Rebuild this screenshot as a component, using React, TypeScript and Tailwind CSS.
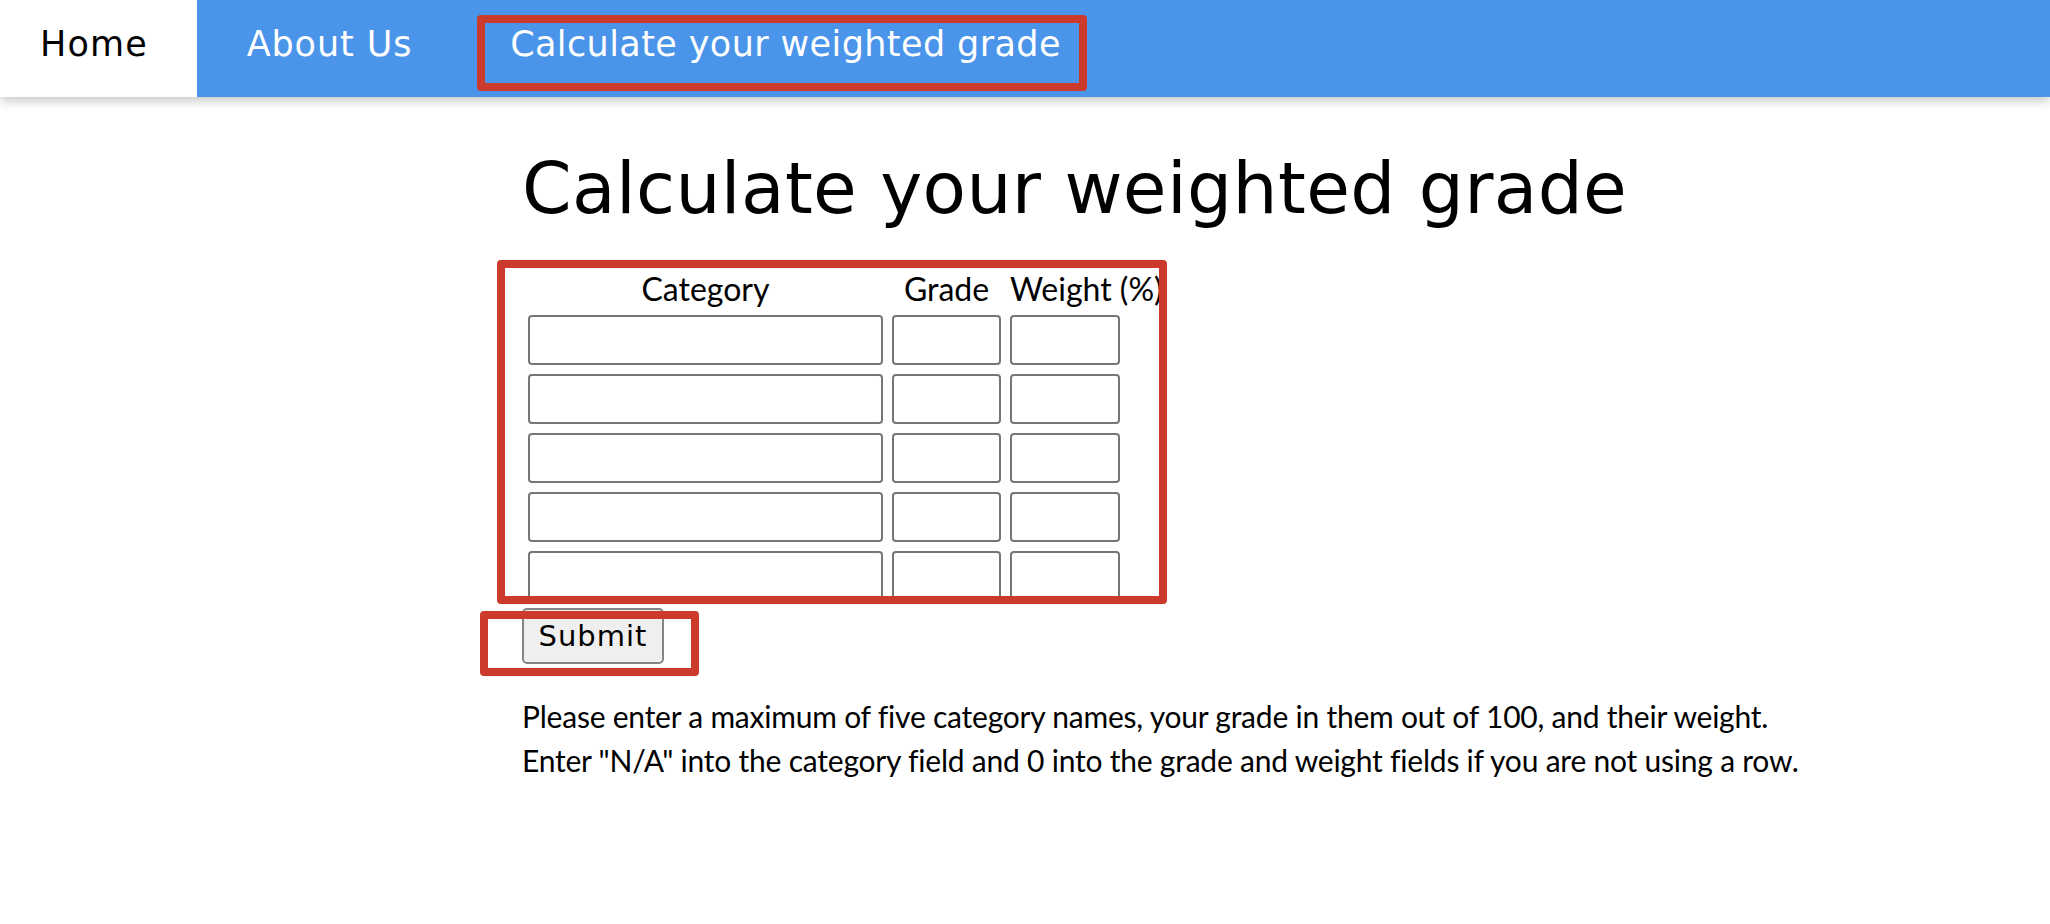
import React from "react";

const mont = { fontFamily: '"DejaVu Sans", "Liberation Sans", sans-serif' };
const lato = { fontFamily: 'Lato, "Liberation Sans", sans-serif' };

function Row() {
  return (
    <div className="grid grid-cols-[355px_109px_152px] gap-x-[9px]">
      <input type="text" className="h-[50px] w-[355px] rounded-[4px] border-2 border-[#767676] bg-white" />
      <input type="text" className="h-[50px] w-[109px] rounded-[4px] border-2 border-[#767676] bg-white" />
      <input type="text" className="h-[50px] w-[110px] rounded-[4px] border-2 border-[#767676] bg-white" />
    </div>
  );
}

export default function App() {
  return (
    <div className="relative min-h-[924px] w-[2050px] bg-white">
      <nav
        className="relative z-10 flex h-[97px] w-full bg-[#4a94ea] shadow-[0_4px_10px_rgba(0,0,0,0.22)]"
        style={mont}
      >
        <a className="flex h-full w-[197px] justify-center bg-white pr-[9px] pt-[27px] text-[35px] leading-[35px] tracking-[1.2px] text-black">
          Home
        </a>
        <a className="flex h-full w-[265px] justify-center pt-[27px] text-[35px] leading-[35px] tracking-[0.9px] text-white">
          About Us
        </a>
        <a className="flex h-full w-[647px] justify-center pt-[27px] text-[35px] leading-[35px] tracking-[0.4px] text-white">
          Calculate your weighted grade
        </a>
      </nav>

      <main className="ml-[522px] flex flex-col items-start">
        <h1 className="mt-[56px] text-[71px] font-normal leading-[71px] tracking-[0.4px] text-black" style={mont}>
          Calculate your weighted grade
        </h1>

        <form className="flex flex-col items-start">
          <div className="ml-[6px] mt-[46px] flex flex-col gap-y-[9px]" style={lato}>
            <div className="mb-[-2px] grid grid-cols-[355px_109px_152px] gap-x-[9px] text-[32px] leading-[38px] text-black">
              <div className="text-center">Category</div>
              <div className="text-center">Grade</div>
              <div className="whitespace-nowrap text-left">Weight (%)</div>
            </div>
            <Row />
            <Row />
            <Row />
            <Row />
            <Row />
          </div>

          <button
            type="button"
            className="mt-[7px] flex h-[56px] w-[142px] items-center justify-center rounded-[5px] border-2 border-[#858585] bg-[#efefef] text-[29px] leading-[29px] tracking-[1px] text-black"
            style={mont}
          >
            Submit
          </button>
        </form>

        <p className="mt-[30px] text-[30px] leading-[44px] tracking-[-0.22px] text-black" style={lato}>
          Please enter a maximum of five category names, your grade in them out of 100, and their weight.
          <br />
          Enter "N/A" into the category field and 0 into the grade and weight fields if you are not using a row.
        </p>
      </main>

      <div className="pointer-events-none absolute left-[477px] top-[15px] z-20 h-[76px] w-[610px] rounded-[4px] border-[8px] border-[#cb3a2b]" />
      <div className="pointer-events-none absolute left-[497px] top-[260px] z-20 h-[344px] w-[670px] rounded-[4px] border-[8px] border-[#cb3a2b]" />
      <div className="pointer-events-none absolute left-[480px] top-[611px] z-20 h-[65px] w-[219px] rounded-[4px] border-[8px] border-[#cb3a2b]" />
    </div>
  );
}
